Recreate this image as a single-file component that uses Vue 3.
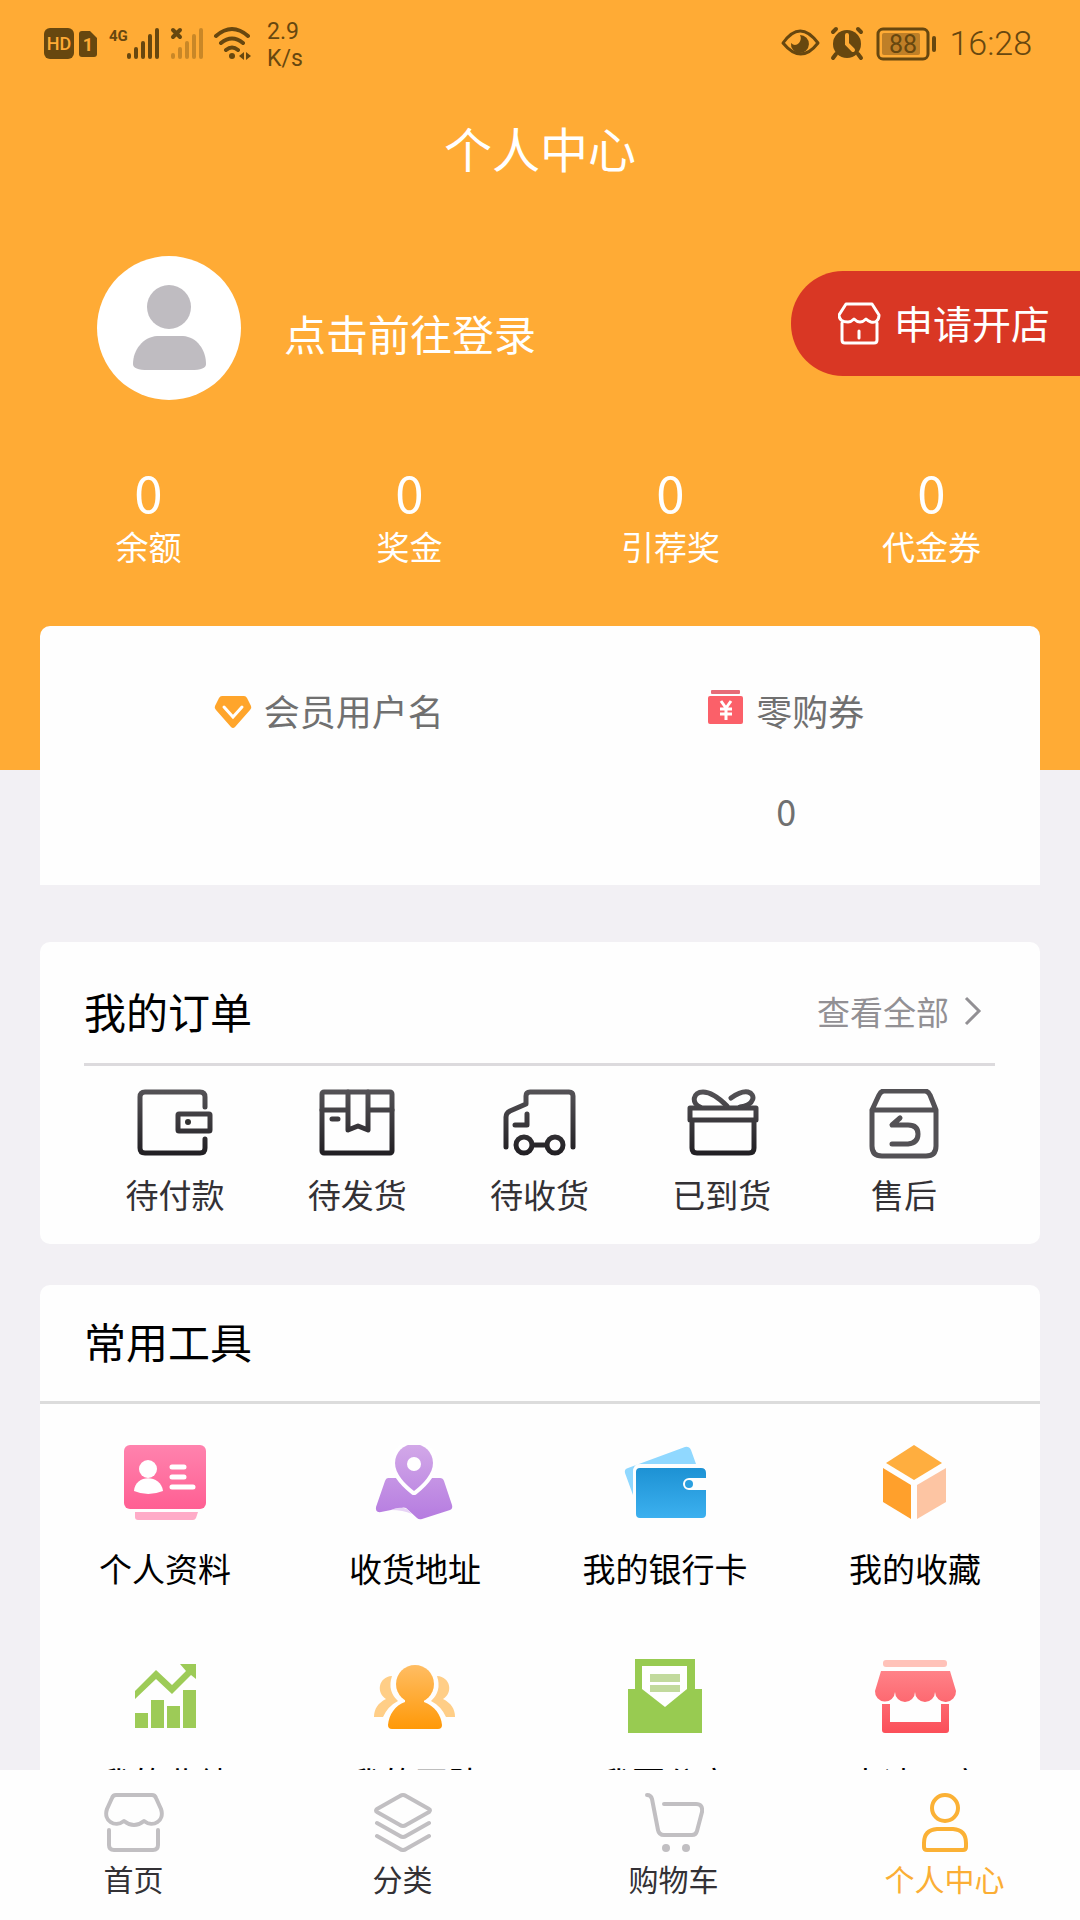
<script setup>
const stats = [
  { label: '余额', value: 0 },
  { label: '奖金', value: 0 },
  { label: '引荐奖', value: 0 },
  { label: '代金券', value: 0 },
]
</script>

<template>
  <div class="page">
    <main class="content">
      <header class="hero">
        <div class="status">
          <svg class="status-left" width="216" height="40" viewBox="0 0 216 40" aria-hidden="true">
            <rect x="0" y="5" width="30" height="31" rx="6" fill="#67470f" />
            <text x="15" y="27" text-anchor="middle" font-size="18" font-weight="500" fill="#ffab35">HD</text>
            <path d="M38 8h8l7 7v16q0 3-3 3H38q-3 0-3-3V11q0-3 3-3z" fill="#67470f" />
            <text x="44" y="28" text-anchor="middle" font-size="18" font-weight="700" fill="#ffab35">1</text>
            <text x="65" y="18" font-size="15" font-weight="700" fill="#67470f">4G</text>
            <g stroke="#67470f" stroke-width="4" stroke-linecap="round">
              <path d="M85 32v2M92 26v8M99 20v14M106 13v21M113 7v27" />
              <path d="M129 32v2M136 26v8M143 20v14M150 13v21M157 7v27" opacity=".35" />
              <path d="M129 7l7 7M136 7l-7 7" />
              <path d="M172 13q16-14 32 0M177 20q11-9 22 0M182 27q6-5 12 0" fill="none" />
            </g>
            <circle cx="188" cy="33" r="3" fill="#67470f" />
            <path d="M200 29v8l-5-4zM202 29v8l5-4z" fill="#67470f" />
          </svg>
          <div class="speed"><span>2.9</span><span>K/s</span></div>
          <div class="status-right">
            <svg width="156" height="40" viewBox="0 0 156 40" aria-hidden="true">
              <path d="M2 20q17-24 35 0q-17 22-35 0z" fill="none" stroke="#67470f" stroke-width="3" stroke-linejoin="round" />
              <path d="M19 12a9 9 0 1 1-9 8q4 4 8 0q3-4 1-8z" fill="#67470f" />
              <circle cx="66" cy="21" r="14" fill="#67470f" />
              <path d="M52 9l3-3M80 9l-3-3M55 31l-3 4M77 31l3 4" stroke="#67470f" stroke-width="4" stroke-linecap="round" />
              <path d="M66 12v9l6 6" fill="none" stroke="#ffab35" stroke-width="4" stroke-linecap="round" />
              <rect x="97" y="6" width="50" height="30" rx="5" fill="none" stroke="#67470f" stroke-width="3" />
              <rect x="101" y="10" width="38" height="22" rx="2" fill="#bf7f27" />
              <text x="122" y="30" text-anchor="middle" font-size="25" fill="#67470f">88</text>
              <path d="M153 15v12" stroke="#67470f" stroke-width="4" stroke-linecap="round" />
            </svg>
            <time>16:28</time>
          </div>
        </div>

        <h1>个人中心</h1>

        <div class="profile">
          <svg class="avatar" width="144" height="144" viewBox="0 0 144 144" aria-hidden="true">
            <circle cx="72" cy="72" r="72" fill="#fff" />
            <circle cx="72" cy="51" r="22" fill="#bfbcc1" />
            <path d="M60 80h26c14 1 23 14 23 28q0 6-15 6H51q-15 0-15-6c0-14 10-27 24-28z" fill="#bfbcc1" />
          </svg>
          <a href="#login" class="login">点击前往登录</a>
          <button type="button" class="open-shop">
            <svg width="44" height="44" viewBox="0 0 44 44" fill="none" stroke="#fff" stroke-width="3" stroke-linecap="round" stroke-linejoin="round" aria-hidden="true">
              <path d="M8 2h26l7 11c0 6-4 8-8 7q-3-1-5-3q-3 3-6 3t-6-3q-3 3-6 3c-6 0-9-3-9-7z" />
              <path d="M4 21v17q0 3 3 3h29q3 0 3-3V21M21 29v7" />
            </svg>
            <span>申请开店</span>
          </button>
        </div>

        <ul class="stats">
          <li v-for="s in stats" :key="s.label">
            <strong>{{ s.value }}</strong>
            <span>{{ s.label }}</span>
          </li>
        </ul>
      </header>

      <section class="card member">
        <div class="member-col">
          <p class="member-head">
            <svg width="38" height="34" viewBox="0 0 38 34" aria-hidden="true">
              <path d="M8 1h22q2 0 3 2l4 8q1 2-1 4L21 32q-2 2-4 0L2 15q-2-2-1-4l4-8q1-2 3-2z" fill="#ffa52b" />
              <path d="M10 12l9 10l9-10" fill="none" stroke="#fff" stroke-width="3" stroke-linecap="round" />
            </svg>
            <span>会员用户名</span>
          </p>
        </div>
        <div class="member-col">
          <p class="member-head coupon">
            <svg width="36" height="44" viewBox="0 0 36 44" aria-hidden="true">
              <rect x="3" y="0" width="29" height="4" rx="1" fill="#e66b77" />
              <rect x="0" y="6" width="35" height="28" rx="2" fill="#fb6069" />
              <path d="M13 11l5 7l5-7M12 19h12M12 24h12M18 18v12" fill="none" stroke="#fff" stroke-width="3" />
            </svg>
            <span>零购券</span>
          </p>
          <p class="member-value">0</p>
        </div>
      </section>

      <section class="card orders">
        <div class="orders-head">
          <h2>我的订单</h2>
          <a href="#orders">
            <span>查看全部</span>
            <svg width="20" height="32" viewBox="0 0 20 32" aria-hidden="true">
              <path d="M3 3l13 13L3 29" fill="none" stroke="#929094" stroke-width="3" />
            </svg>
          </a>
        </div>
        <nav class="order-list" aria-label="我的订单">
          <svg class="defs" width="0" height="0" aria-hidden="true">
            <linearGradient id="ink" gradientUnits="userSpaceOnUse" x1="0" y1="0" x2="0" y2="68">
              <stop offset="0" stop-color="#555357" /><stop offset="1" stop-color="#1f1d21" />
            </linearGradient>
          </svg>
          <a href="#unpaid">
            <svg class="line" width="76" height="70" viewBox="0 0 76 70" aria-hidden="true">
              <path d="M68 18V8q0-5-5-5H8Q3 3 3 8v51q0 5 5 5h55q5 0 5-5V50" />
              <rect x="41" y="25" width="32" height="17" rx="1" />
              <circle cx="51" cy="33" r="3" fill="#333" stroke="none" />
            </svg>
            <span>待付款</span>
          </a>
          <a href="#unsent">
            <svg class="line" width="76" height="70" viewBox="0 0 76 70" aria-hidden="true">
              <rect x="3" y="3" width="70" height="61" rx="2" />
              <path d="M3 21h26M49 21h24M29 3v38l10-4l10 4V3M13 30h6" />
            </svg>
            <span>待发货</span>
          </a>
          <a href="#unreceived">
            <svg class="line" width="76" height="70" viewBox="0 0 76 70" aria-hidden="true">
              <path d="M5 58V28q0-4 4-6l16-7V7q0-4 4-4h39q4 0 4 4v51M26 25v11H14M32 56h13" />
              <circle cx="23" cy="56" r="8" />
              <circle cx="54" cy="56" r="8" />
            </svg>
            <span>待收货</span>
          </a>
          <a href="#arrived">
            <svg class="line" width="76" height="70" viewBox="0 0 76 70" aria-hidden="true">
              <path d="M6 19h66v12H6zM8 31v28q0 5 5 5h52q5 0 5-5V31" />
              <path d="M43 17C33 7 26 3 19 3c-10 0-12 11-3 15M47 9c7-5 12-7 17-6c8 2 7 13-8 15" />
            </svg>
            <span>已到货</span>
          </a>
          <a href="#after-sale">
            <svg class="line plain" width="76" height="70" viewBox="0 0 76 70" aria-hidden="true">
              <path d="M6 21L13 6q2-4 5-4h41q3 0 5 4l6 15v36q0 10-10 10H16Q6 67 6 57V21h64" />
              <path d="M34 29l-8 7h16q10 0 10 9t-10 10H26" />
            </svg>
            <span>售后</span>
          </a>
        </nav>
      </section>

      <section class="card tools">
        <h2>常用工具</h2>
        <nav class="tool-grid" aria-label="常用工具">
          <a href="#profile">
            <svg width="84" height="76" viewBox="0 0 84 76" aria-hidden="true">
              <linearGradient id="pink" x1="0" y1="0" x2="0" y2="1"><stop offset="0" stop-color="#ff83ae" /><stop offset="1" stop-color="#ff5f93" /></linearGradient>
              <rect x="1" y="0" width="82" height="64" rx="6" fill="url(#pink)" />
              <path d="M12 67h63l-2 6q-1 2-3 2H15q-3 0-3-3z" fill="#ffacc8" />
              <circle cx="25" cy="24" r="9" fill="#fff" />
              <path d="M11 46c1-17 27-17 29 0q-15 6-29 0z" fill="#fff" />
              <path d="M49 22h12M49 32h12M49 42h21" stroke="#fff" stroke-width="5" stroke-linecap="round" />
            </svg>
            <span>个人资料</span>
          </a>
          <a href="#address">
            <svg width="84" height="76" viewBox="0 0 84 76" aria-hidden="true">
              <linearGradient id="violet" gradientUnits="userSpaceOnUse" x1="0" y1="0" x2="0" y2="75"><stop offset="0" stop-color="#d2a8e8" /><stop offset="1" stop-color="#b57be0" /></linearGradient>
              <path d="M15 33h52q3 0 4 3l8 24q1 4-2 5l-28 9q-3 1-5-1L33 63q-2-1-5 0L8 67q-6 1-5-5l9-26q1-3 3-3z" fill="url(#violet)" />
              <path d="M18 65q8-4 16-1l5 5q-9-4-21-4z" fill="#e7d3f5" />
              <path d="M41 46C32 39 22 29 22 18a19 19 0 0 1 38 0c0 11-10 21-19 28z" fill="none" stroke="#fff" stroke-width="8" stroke-linejoin="round" />
              <path d="M41 46C32 39 22 29 22 18a19 19 0 0 1 38 0c0 11-10 21-19 28z" fill="url(#violet)" />
              <circle cx="41" cy="19" r="7" fill="#fff" />
            </svg>
            <span>收货地址</span>
          </a>
          <a href="#cards">
            <svg width="84" height="76" viewBox="0 0 84 76" aria-hidden="true">
              <linearGradient id="blue" x1="0" y1="0" x2="0" y2="1"><stop offset="0" stop-color="#1d92d4" /><stop offset="1" stop-color="#3cb0ef" /></linearGradient>
              <path d="M5 23L62 2q4-1 6 3l5 14H17q-7 0-7 8v23L2 28q-1-4 3-5z" fill="#90d8ff" />
              <path d="M17 23h61q5 0 5 5v5H66a6 6 0 0 0 0 12h17v24q0 4-4 4H17q-4 0-4-4V27q0-4 4-4z" fill="url(#blue)" />
              <circle cx="66" cy="39" r="4" fill="#2a9fdf" />
            </svg>
            <span>我的银行卡</span>
          </a>
          <a href="#favorites">
            <svg width="84" height="76" viewBox="0 0 84 76" aria-hidden="true">
              <path d="M41 0l28 18l-28 17l-28-17z" fill="#ffae3f" />
              <path d="M10 23l28 17v34L10 57z" fill="#ffa02c" />
              <path d="M73 23L44 40v34l29-17z" fill="#fdc5a3" />
            </svg>
            <span>我的收藏</span>
          </a>
          <a href="#performance">
            <svg width="84" height="76" viewBox="0 0 84 76" fill="#9dcb57" aria-hidden="true">
              <path d="M12 54h13v15H12zM28 41h13v28H28zM44 47h13v22H44zM60 31h13v38H60z" />
              <path d="M12 32l21-21l16 15l14-14l-6-7h16v15l-5-4l-19 19l-16-15l-21 20z" />
            </svg>
            <span>我的业绩</span>
          </a>
          <a href="#team">
            <svg width="84" height="76" viewBox="0 0 84 76" aria-hidden="true">
              <linearGradient id="amber" gradientUnits="userSpaceOnUse" x1="0" y1="6" x2="0" y2="70"><stop offset="0" stop-color="#ffbd63" /><stop offset="1" stop-color="#ff9908" /></linearGradient>
              <path d="M19 17C5 18 3 34 13 40C5 44 1 50 1 58h9q5-11 15-16q-11-10-6-25zM64 17c14 1 16 17 6 23c8 4 12 10 12 18h-9q-5-11-15-16q11-10 6-25z" fill="#ffce87" />
              <circle cx="42" cy="25" r="19" fill="url(#amber)" />
              <path d="M32 38h19v5c11 4 17 13 18 23q0 4-4 4H19q-4 0-4-4c1-10 7-20 17-23z" fill="url(#amber)" />
            </svg>
            <span>我的团队</span>
          </a>
          <a href="#share">
            <svg width="84" height="76" viewBox="0 0 84 76" aria-hidden="true">
              <path d="M12 0h60v30h7v44H5V30h7z" fill="#98cb51" />
              <path d="M19 7h45v23L42 48L19 30z" fill="#fff" />
              <path d="M27 15h30v8H27zM27 26h30v7H27z" fill="#c2da9d" />
            </svg>
            <span>我要分享</span>
          </a>
          <a href="#apply">
            <svg width="84" height="76" viewBox="0 0 84 76" aria-hidden="true">
              <linearGradient id="coral" gradientUnits="userSpaceOnUse" x1="0" y1="12" x2="0" y2="74"><stop offset="0" stop-color="#ff8288" /><stop offset="1" stop-color="#fb4f59" /></linearGradient>
              <rect x="10" y="1" width="64" height="7" rx="3" fill="#ffc2b9" />
              <path d="M8 12h69l6 20a10 10 0 0 1-21 1a10 10 0 0 1-20 0a10 10 0 0 1-20 0a10 10 0 0 1-20-1zM9 45h8v18h51V45h8v26q0 3-3 3H12q-3 0-3-3z" fill="url(#coral)" />
            </svg>
            <span>申请开店</span>
          </a>
        </nav>
      </section>
    </main>

    <nav class="tabbar" aria-label="主导航">
      <a href="#home">
        <svg width="60" height="60" viewBox="0 0 60 60" aria-hidden="true">
          <path d="M12 3h36q3 0 4 3l5 11c4 12-8 19-17 12q-10 8-20 0C11 36-1 29 3 17L8 6q1-3 4-3zM5 38v15q0 5 5 5h39q5 0 5-5V38" />
        </svg>
        <span>首页</span>
      </a>
      <a href="#category">
        <svg width="60" height="60" viewBox="0 0 60 60" aria-hidden="true">
          <path d="M27 4q3-2 6 0l23 13q2 1 0 3L33 33q-3 2-6 0L4 20q-2-1 0-3zM4 31l23 13q3 2 6 0l23-13M4 44l23 13q3 2 6 0l23-13" />
        </svg>
        <span>分类</span>
      </a>
      <a href="#cart">
        <svg width="60" height="60" viewBox="0 0 60 60" aria-hidden="true">
          <path d="M3 3q4 0 5 4l6 31q1 5 6 5h28q4 0 5-4l5-19q1-8-6-8H20" />
          <circle cx="22" cy="56" r="4" class="dot" /><circle cx="42" cy="56" r="4" class="dot" />
        </svg>
        <span>购物车</span>
      </a>
      <a href="#me" class="active" aria-current="page">
        <svg width="60" height="60" viewBox="0 0 60 60" aria-hidden="true">
          <circle cx="30" cy="16" r="13" />
          <path d="M22 37h16q13 1 13 14v4q0 3-3 3H12q-3 0-3-3v-4q0-13 13-14z" />
        </svg>
        <span>个人中心</span>
      </a>
    </nav>
  </div>
</template>

<style>
body {
  margin: 0;
  background: #f2f0f4;
}
</style>

<style scoped>
.page {
  display: flex;
  flex-direction: column;
  height: 100vh;
  background: #f2f0f4;
  color: #000;
  font-family: "Noto Sans CJK SC", sans-serif;
}
.page a {
  color: inherit;
  text-decoration: none;
}
.page svg {
  display: block;
  flex: none;
}
h1, h2, p, ul {
  margin: 0;
  padding: 0;
  font-weight: 400;
}
.content {
  flex: 1;
  min-height: 0;
  overflow-y: auto;
  scrollbar-width: none;
}
.hero {
  background: #ffab35;
  color: #fff;
  padding-bottom: 199px;
}
.status {
  display: flex;
  align-items: center;
  height: 86px;
  padding: 0 48px 0 44px;
  color: #67470f;
  font-family: Roboto, sans-serif;
}
.speed {
  display: flex;
  flex-direction: column;
  margin-left: 7px;
  padding-top: 4px;
  font-size: 23px;
  line-height: 27px;
}
.status-right {
  display: flex;
  align-items: center;
  gap: 12px;
  margin-left: auto;
}
.status-right time {
  font-size: 34px;
  font-weight: 300;
}
h1 {
  padding-bottom: 6px;
  font-size: 48px;
  line-height: 122px;
  text-align: center;
}
.profile {
  display: flex;
  align-items: center;
  padding: 42px 0 0 97px;
}
.login {
  margin-left: 43px;
  padding-top: 10px;
  font-size: 42px;
  line-height: 60px;
}
.open-shop {
  display: flex;
  align-items: center;
  align-self: flex-start;
  gap: 12px;
  height: 105px;
  margin: 15px 0 0 auto;
  padding: 0 30px 0 47px;
  border: 0;
  border-radius: 52px 0 0 52px;
  background: #d93724;
  color: #fff;
  font-family: inherit;
  font-size: 39px;
}
.open-shop span {
  padding-bottom: 4px;
}
.stats {
  display: grid;
  grid-template-columns: repeat(4, 1fr);
  margin-top: 61px;
  padding: 0 18px;
  list-style: none;
  text-align: center;
}
.stats li {
  display: flex;
  flex-direction: column;
}
.stats strong {
  font-size: 51px;
  font-weight: 400;
  line-height: 60px;
}
.stats span {
  font-size: 33px;
  line-height: 50px;
}
.card {
  margin: 0 40px;
  border-radius: 10px;
  background: #fefefe;
}
.member {
  display: grid;
  grid-template-columns: 1fr 1fr;
  margin-top: -144px;
  padding: 54px 25px 45px 60px;
  border-radius: 10px 10px 0 0;
  color: #707070;
  font-size: 36px;
  line-height: 60px;
  text-align: center;
}
.member-head {
  display: flex;
  align-items: center;
  justify-content: center;
  gap: 12px;
}
.member-head svg {
  margin-top: 4px;
}
.member-value {
  margin-top: 40px;
}
.orders {
  margin-top: 57px;
  padding: 22px 45px 23px 44px;
}
.orders-head {
  display: flex;
  align-items: center;
  justify-content: space-between;
  height: 93px;
  padding-bottom: 6px;
  border-bottom: 3px solid #dcdadd;
}
h2 {
  font-size: 42px;
}
.orders-head a {
  display: flex;
  align-items: center;
  gap: 14px;
  padding-right: 12px;
  color: #929094;
  font-size: 33px;
}
.order-list {
  display: grid;
  grid-template-columns: repeat(5, 1fr);
  padding-top: 23px;
  color: #333135;
}
.page .defs {
  position: absolute;
}
.order-list a {
  display: flex;
  flex-direction: column;
  align-items: center;
  gap: 10px;
  padding-bottom: 2px;
  font-size: 33px;
  line-height: 50px;
}
.line {
  fill: none;
  stroke: url(#ink);
  stroke-width: 5;
  stroke-linecap: round;
  stroke-linejoin: round;
}
.line.plain {
  stroke: #535155;
}
.tools {
  margin-top: 41px;
}
.tools h2 {
  padding: 0 44px 4px;
  border-bottom: 3px solid #dcdcdc;
  line-height: 112px;
}
.tool-grid {
  display: grid;
  grid-template-columns: repeat(4, 1fr);
  row-gap: 66px;
  padding: 41px 0 40px;
}
.tool-grid a {
  display: flex;
  flex-direction: column;
  align-items: center;
  gap: 22px;
  font-size: 33px;
  line-height: 50px;
}
.tabbar {
  display: grid;
  grid-template-columns: 267fr 271fr 271fr 271fr;
  padding: 22px 0;
  background: #fefefe;
  color: #333135;
}
.tabbar a {
  display: flex;
  flex-direction: column;
  align-items: center;
  gap: 6px;
  font-size: 30px;
  line-height: 40px;
}
.tabbar svg {
  fill: none;
  stroke: #c1bfc2;
  stroke-width: 4;
  stroke-linecap: round;
  stroke-linejoin: round;
}
.tabbar .dot {
  fill: #c1bfc2;
  stroke: none;
}
.tabbar .active {
  color: #fbae35;
}
.tabbar .active svg {
  stroke: #fbb135;
}
</style>
